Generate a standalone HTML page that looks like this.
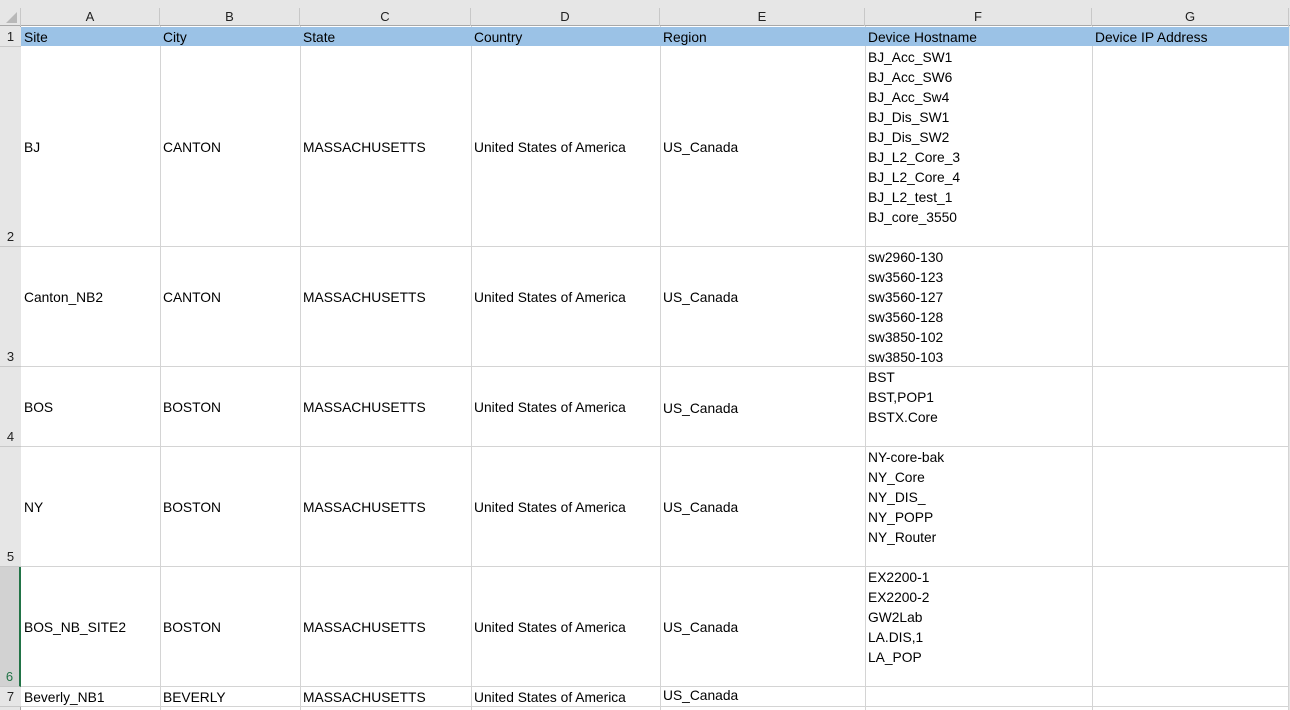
<!DOCTYPE html>
<html><head><meta charset="utf-8"><style>
body{margin:0;width:1290px;height:710px;overflow:hidden;background:#fff;font-family:"Liberation Sans",Arial,sans-serif;font-size:13.8px;color:#000;position:relative}
div{position:absolute;box-sizing:border-box}
.t{line-height:16px;white-space:nowrap;margin-top:1px}
.vl{width:1px;background:#d4d4d4;top:26px;height:684px}
.hl{height:1px;background:#d4d4d4;left:21px;width:1268px}
.ch{top:8px;height:18px;line-height:18px;text-align:center;color:#222;font-size:13px;border-right:1px solid #c8c8c8}
.rn{left:0;width:21px;text-align:center;color:#222;border-bottom:1px solid #c8c8c8;background:#e6e6e6;font-size:13px}
.f{margin-top:1px}
.f div{position:static;line-height:20px;white-space:nowrap}
</style></head><body>
<div style="left:0;top:0;width:1290px;height:26px;background:#e6e6e6;border-bottom:1px solid #a8a8a8"></div>
<div style="left:0;top:8px;width:21px;height:18px;border-right:1px solid #c8c8c8"></div>
<div style="left:6px;top:12px;width:0;height:0;border-left:11px solid transparent;border-bottom:11px solid #b8b8b8"></div>
<div class="ch" style="left:21px;width:139px">A</div>
<div class="ch" style="left:160px;width:140px">B</div>
<div class="ch" style="left:300px;width:171px">C</div>
<div class="ch" style="left:471px;width:189px">D</div>
<div class="ch" style="left:660px;width:205px">E</div>
<div class="ch" style="left:865px;width:227px">F</div>
<div class="ch" style="left:1092px;width:197px">G</div>
<div style="left:1289px;top:26px;width:1px;height:684px;background:#e6e6e6"></div>
<div style="left:0;top:26px;width:21px;height:684px;background:#e6e6e6;border-right:1px solid #a8a8a8"></div>
<div class="vl" style="left:160px"></div><div class="vl" style="left:300px"></div><div class="vl" style="left:471px"></div><div class="vl" style="left:660px"></div><div class="vl" style="left:865px"></div><div class="vl" style="left:1092px"></div><div class="vl" style="left:1288px"></div>
<div style="left:21px;top:27px;width:1268px;height:19px;background:#9bc2e6"></div>
<div class="hl" style="top:246px"></div><div class="hl" style="top:366px"></div><div class="hl" style="top:446px"></div><div class="hl" style="top:566px"></div><div class="hl" style="top:686px"></div><div class="hl" style="top:706px"></div>
<div class="rn" style="top:27px;height:20px;line-height:20px">1</div>
<div class="rn" style="top:47px;height:200px;line-height:16px;padding-top:182px">2</div>
<div class="rn" style="top:247px;height:120px;padding-top:102px">3</div>
<div class="rn" style="top:367px;height:80px;padding-top:62px">4</div>
<div class="rn" style="top:447px;height:120px;padding-top:102px">5</div>
<div class="rn" style="top:567px;height:120px;padding-top:102px;background:#d2d2d2;border-right:2px solid #217346;color:#217346">6</div>
<div class="rn" style="top:687px;height:20px;line-height:20px">7</div>
<div class="t" style="left:24px;top:29px">Site</div><div class="t" style="left:163px;top:29px">City</div><div class="t" style="left:303px;top:29px">State</div><div class="t" style="left:474px;top:29px">Country</div><div class="t" style="left:663px;top:29px">Region</div><div class="t" style="left:868px;top:29px">Device Hostname</div><div class="t" style="left:1095px;top:29px">Device IP Address</div>

<div class="t" style="left:24px;top:139px">BJ</div><div class="t" style="left:163px;top:139px">CANTON</div><div class="t" style="left:303px;top:139px">MASSACHUSETTS</div><div class="t" style="left:474px;top:139px">United States of America</div><div class="t" style="left:663px;top:139px">US_Canada</div>
<div class="f" style="left:868px;top:47px"><div>BJ_Acc_SW1</div><div>BJ_Acc_SW6</div><div>BJ_Acc_Sw4</div><div>BJ_Dis_SW1</div><div>BJ_Dis_SW2</div><div>BJ_L2_Core_3</div><div>BJ_L2_Core_4</div><div>BJ_L2_test_1</div><div>BJ_core_3550</div></div>

<div class="t" style="left:24px;top:289px">Canton_NB2</div><div class="t" style="left:163px;top:289px">CANTON</div><div class="t" style="left:303px;top:289px">MASSACHUSETTS</div><div class="t" style="left:474px;top:289px">United States of America</div><div class="t" style="left:663px;top:289px">US_Canada</div>
<div class="f" style="left:868px;top:247px"><div>sw2960-130</div><div>sw3560-123</div><div>sw3560-127</div><div>sw3560-128</div><div>sw3850-102</div><div>sw3850-103</div></div>

<div class="t" style="left:24px;top:399px">BOS</div><div class="t" style="left:163px;top:399px">BOSTON</div><div class="t" style="left:303px;top:399px">MASSACHUSETTS</div><div class="t" style="left:474px;top:399px">United States of America</div><div class="t" style="left:663px;top:400px">US_Canada</div>
<div class="f" style="left:868px;top:367px"><div>BST</div><div>BST,POP1</div><div>BSTX.Core</div></div>

<div class="t" style="left:24px;top:499px">NY</div><div class="t" style="left:163px;top:499px">BOSTON</div><div class="t" style="left:303px;top:499px">MASSACHUSETTS</div><div class="t" style="left:474px;top:499px">United States of America</div><div class="t" style="left:663px;top:499px">US_Canada</div>
<div class="f" style="left:868px;top:447px"><div>NY-core-bak</div><div>NY_Core</div><div>NY_DIS_</div><div>NY_POPP</div><div>NY_Router</div></div>

<div class="t" style="left:24px;top:619px">BOS_NB_SITE2</div><div class="t" style="left:163px;top:619px">BOSTON</div><div class="t" style="left:303px;top:619px">MASSACHUSETTS</div><div class="t" style="left:474px;top:619px">United States of America</div><div class="t" style="left:663px;top:619px">US_Canada</div>
<div class="f" style="left:868px;top:567px"><div>EX2200-1</div><div>EX2200-2</div><div>GW2Lab</div><div>LA.DIS,1</div><div>LA_POP</div></div>

<div class="t" style="left:24px;top:689px">Beverly_NB1</div><div class="t" style="left:163px;top:689px">BEVERLY</div><div class="t" style="left:303px;top:689px">MASSACHUSETTS</div><div class="t" style="left:474px;top:689px">United States of America</div><div class="t" style="left:663px;top:687px">US_Canada</div>
</body></html>
